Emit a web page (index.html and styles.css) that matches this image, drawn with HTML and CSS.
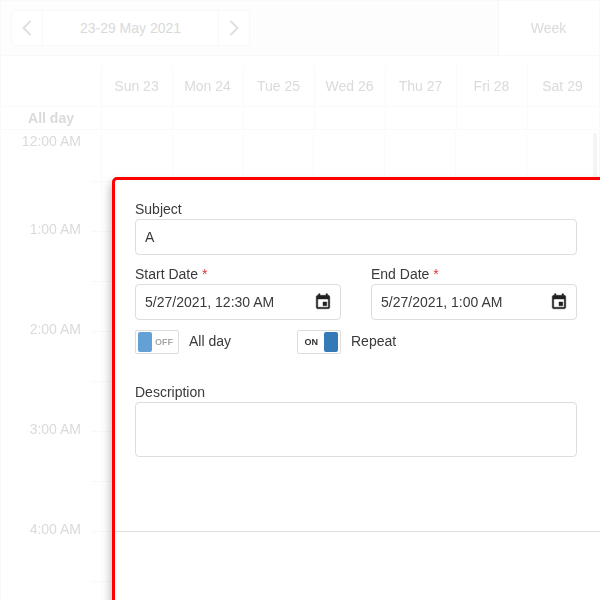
FILE: index.html
```html
<!DOCTYPE html>
<html lang="en">
<head>
<meta charset="utf-8">
<title>Scheduler</title>
<link rel="stylesheet" href="styles.css">
</head>
<body>
<div class="scheduler">
  <div class="toolbar">
    <div class="nav">
      <button class="nav-btn" type="button" aria-label="Previous">
        <svg width="12" height="16" viewBox="0 0 12 16"><path d="M9.5 1 2.5 8l7 7" fill="none" stroke="#dfdfdf" stroke-width="2"/></svg>
      </button>
      <div class="nav-date">23-29 May 2021</div>
      <button class="nav-btn" type="button" aria-label="Next">
        <svg width="12" height="16" viewBox="0 0 12 16"><path d="M2.5 1l7 7-7 7" fill="none" stroke="#dfdfdf" stroke-width="2"/></svg>
      </button>
    </div>
    <div class="view">Week</div>
  </div>
  <div class="head">
    <div class="corner"></div>
    <div class="day">Sun 23</div>
    <div class="day">Mon 24</div>
    <div class="day">Tue 25</div>
    <div class="day">Wed 26</div>
    <div class="day">Thu 27</div>
    <div class="day">Fri 28</div>
    <div class="day">Sat 29</div>
  </div>
  <div class="allday">
    <div class="allday-label">All day</div>
    <div class="allday-cell"></div>
    <div class="allday-cell"></div>
    <div class="allday-cell"></div>
    <div class="allday-cell"></div>
    <div class="allday-cell"></div>
    <div class="allday-cell"></div>
    <div class="allday-cell"></div>
  </div>
  <div class="body">
    <div class="times">
      <div class="slot slot-first"><span class="time">12:00 AM</span></div>
      <div class="slot"><span class="time time-end">1:00 AM</span></div>
      <div class="slot"></div>
      <div class="slot"><span class="time time-end">2:00 AM</span></div>
      <div class="slot"></div>
      <div class="slot"><span class="time time-end">3:00 AM</span></div>
      <div class="slot"></div>
      <div class="slot"><span class="time time-end">4:00 AM</span></div>
      <div class="slot"></div>
    </div>
    <div class="grid">
      <div class="col"></div>
      <div class="col"></div>
      <div class="col"></div>
      <div class="col"></div>
      <div class="col"></div>
      <div class="col"></div>
      <div class="col"></div>
    </div>
    <div class="scrollbar"></div>
  </div>
</div>

<div class="dialog">
  <form class="form">
    <div class="field">
      <label class="label" for="subject">Subject</label>
      <input class="input" id="subject" type="text" value="A">
    </div>
    <div class="dates">
      <div class="field">
        <label class="label" for="start">Start Date <span class="req">*</span></label>
        <div class="input date-box">
          <input class="date-input" id="start" type="text" value="5/27/2021, 12:30 AM">
          <svg class="cal" width="18" height="18" viewBox="0 0 24 24"><path fill="#212121" stroke="#212121" stroke-width=".6" d="M17 12h-5v5h5v-5zM16 1v2H8V1H6v2H5c-1.11 0-1.99.9-1.99 2L3 19c0 1.1.89 2 2 2h14c1.1 0 2-.9 2-2V5c0-1.1-.9-2-2-2h-1V1h-2zm3 18H5V8h14v11z"/></svg>
        </div>
      </div>
      <div class="field">
        <label class="label" for="end">End Date <span class="req">*</span></label>
        <div class="input date-box">
          <input class="date-input" id="end" type="text" value="5/27/2021, 1:00 AM">
          <svg class="cal" width="18" height="18" viewBox="0 0 24 24"><path fill="#212121" stroke="#212121" stroke-width=".6" d="M17 12h-5v5h5v-5zM16 1v2H8V1H6v2H5c-1.11 0-1.99.9-1.99 2L3 19c0 1.1.89 2 2 2h14c1.1 0 2-.9 2-2V5c0-1.1-.9-2-2-2h-1V1h-2zm3 18H5V8h14v11z"/></svg>
        </div>
      </div>
    </div>
    <div class="toggles">
      <div class="toggle-group">
        <div class="switch"><span class="knob knob-off"></span><span class="switch-off">OFF</span></div>
        <span class="toggle-label">All day</span>
      </div>
      <div class="toggle-group">
        <div class="switch switch-right"><span class="switch-on">ON</span><span class="knob knob-on"></span></div>
        <span class="toggle-label">Repeat</span>
      </div>
    </div>
    <div class="field field-desc">
      <label class="label" for="desc">Description</label>
      <textarea class="textarea" id="desc"></textarea>
    </div>
  </form>
  <div class="footer"></div>
</div>
</body>
</html>
```
FILE: styles.css
```css
* { box-sizing: border-box; }

html, body {
  margin: 0;
  height: 600px;
  overflow: hidden;
  background: #fff;
}

body {
  font-family: "Liberation Sans", Arial, sans-serif;
  font-size: 14px;
  color: #dadada;
}

.scheduler {
  width: 600px;
  height: 600px;
  border: 1px solid #f9f9f9;
  border-bottom: 0;
  display: flex;
  flex-direction: column;
  overflow: hidden;
  opacity: 0.99;
}

.toolbar {
  height: 55px;
  flex: none;
  display: flex;
  justify-content: space-between;
  background: #fdfdfd;
  border-bottom: 1px solid #f8f8f8;
  padding-left: 10px;
}

.nav {
  width: 239px;
  height: 36px;
  margin-top: 9px;
  display: flex;
  background: #fff;
  border: 1px solid #f8f8f8;
  border-radius: 4px;
}

.nav-btn {
  width: 30px;
  padding: 0;
  border: 0;
  background: transparent;
  display: flex;
  align-items: center;
  justify-content: center;
}

.nav-date {
  flex: 1;
  display: flex;
  align-items: center;
  justify-content: center;
  border-left: 1px solid #f8f8f8;
  border-right: 1px solid #f8f8f8;
}

.view {
  width: 101px;
  background: #fff;
  border-left: 1px solid #f8f8f8;
  display: flex;
  align-items: center;
  justify-content: center;
  padding-bottom: 1px;
  padding-right: 1px;
}

.head {
  height: 51px;
  flex: none;
  display: flex;
  padding-top: 9px;
  border-bottom: 1px solid #fafafa;
}

.corner { width: 100px; flex: none; }

.day {
  width: 71px;
  flex: none;
  display: flex;
  align-items: center;
  justify-content: center;
  padding-right: 1px;
  border-left: 1px solid #fafafa;
}

.allday {
  height: 23px;
  flex: none;
  display: flex;
  border-bottom: 1px solid #fafafa;
}

.allday-label {
  width: 100px;
  flex: none;
  text-align: center;
  font-weight: bold;
  line-height: 22px;
}

.allday-cell {
  width: 71px;
  flex: none;
  border-left: 1px solid #fafafa;
}

.body {
  flex: 1;
  display: flex;
  min-height: 0;
}

.times { width: 100px; flex: none; }

.slot {
  height: 50px;
  padding-right: 20px;
  display: flex;
  justify-content: flex-end;
  align-items: flex-end;
  background: linear-gradient(#f8f8f8, #f8f8f8) right bottom / 10px 1px no-repeat;
}

.slot-first {
  height: 52px;
  align-items: flex-start;
  padding-top: 3px;
}

.time {
  display: block;
  height: 16px;
  line-height: 16px;
}

.time-end { margin-bottom: -5px; }

.grid {
  display: flex;
  flex: none;
  width: 495.25px;
  padding-top: 1px;
}

.col {
  flex: 1;
  margin-top: 1px;
  border-left: 1px solid #fafafa;
  background: linear-gradient(to bottom, transparent 49px, #f8f8f8 49px) 0 0 / 100% 50px repeat-y;
}

.scrollbar {
  width: 4px;
  height: 44px;
  margin-top: 3px;
  margin-left: -3.25px;
  flex: none;
  background: #f5f5f5;
}

.dialog {
  position: absolute;
  left: 112px;
  top: 177px;
  width: 600px;
  height: 500px;
  background: #fff;
  border: 3px solid #f00;
  border-radius: 5px;
  box-shadow: -2px 5px 8px rgba(0, 0, 0, 0.25);
  color: #3a3a3a;
  padding-top: 20px;
}

.form {
  width: 442px;
  margin-left: 20px;
  display: flex;
  flex-direction: column;
}

.field {
  display: flex;
  flex-direction: column;
}

.label {
  display: block;
  height: 16px;
  line-height: 16px;
  margin: 1px 0 2px;
}

.req { color: #d9343b; }

.input {
  height: 36px;
  width: 100%;
  padding: 0 9px;
  border: 1px solid #ddd;
  border-radius: 4px;
  background: #fff;
  font: inherit;
  color: #3a3a3a;
}

.dates {
  display: grid;
  grid-template-columns: 206px 206px;
  column-gap: 30px;
  margin-top: 10px;
}

.date-box {
  display: flex;
  align-items: center;
  justify-content: space-between;
  padding-right: 8px;
}

.date-input {
  flex: 1;
  min-width: 0;
  padding: 0;
  border: 0;
  outline: 0;
  background: transparent;
  font: inherit;
  color: #3a3a3a;
}

.cal { flex: none; }

.toggles {
  display: flex;
  margin-top: 10px;
  height: 24px;
}

.toggle-group {
  width: 162px;
  display: flex;
  align-items: center;
  gap: 10px;
}

.switch {
  width: 44px;
  height: 24px;
  flex: none;
  display: flex;
  align-items: center;
  gap: 3px;
  padding: 0 2px;
  border: 1px solid #ddd;
  border-radius: 2px;
  font-size: 9px;
  font-weight: bold;
}

.switch-right {
  justify-content: flex-end;
  gap: 6px;
}

.knob {
  width: 14px;
  height: 20px;
  flex: none;
  border-radius: 2px;
}

.knob-off { background: #63a0d6; }
.knob-on { background: #337ab7; }

.switch-off { color: #a8a8a8; }
.switch-on { color: #333; }

.toggle-label {
  line-height: 20px;
  margin-bottom: 2px;
}

.field-desc { margin-top: 29px; }

.textarea {
  display: block;
  width: 100%;
  height: 55px;
  padding: 8px 9px;
  border: 1px solid #ddd;
  border-radius: 4px;
  resize: none;
  font: inherit;
  color: #3a3a3a;
  background: #fff;
}

.footer {
  margin-top: 74px;
  border-top: 1px solid #ddd;
}
```
